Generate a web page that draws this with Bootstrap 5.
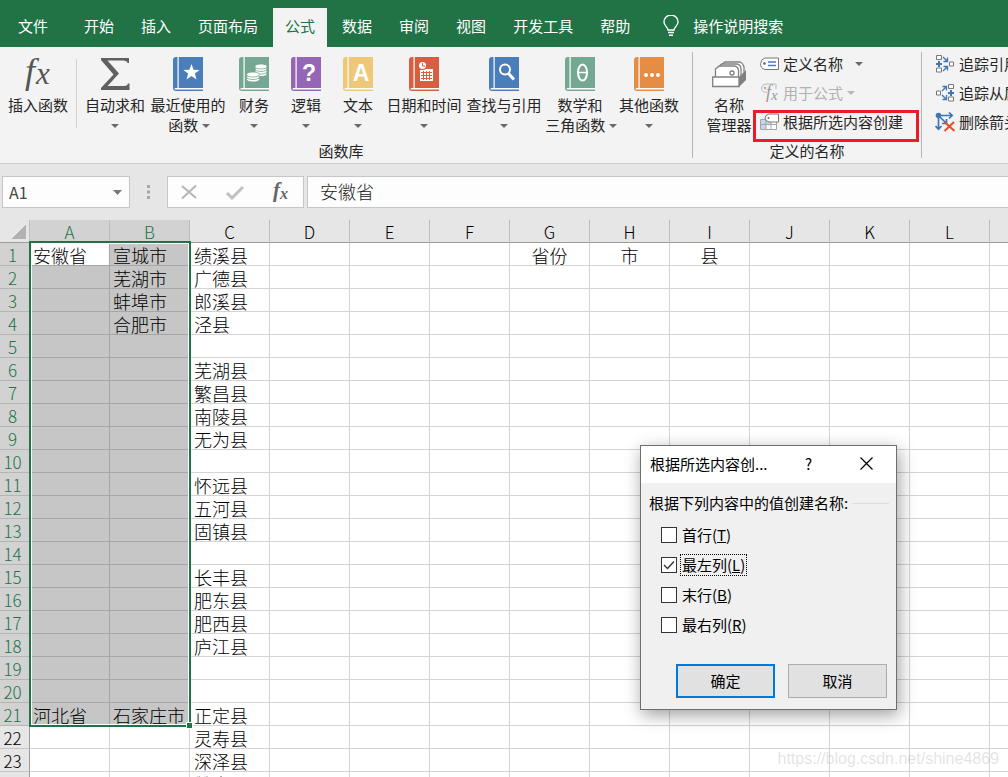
<!DOCTYPE html>
<html lang="zh-CN">
<head>
<meta charset="utf-8">
<meta name="viewport" content="width=device-width, initial-scale=1">
<title>Excel - 公式</title>
<link href="https://cdn.jsdelivr.net/npm/bootstrap@5.3.0/dist/css/bootstrap.min.css" rel="stylesheet">
<style>
  :root { --hdr: 30px; --colw: 80px; --rowh: 23px; --green: #217346; }
  body { font-family: "Noto Sans CJK SC", sans-serif; font-size: 15px; line-height: 20px; color: #262626; background: #e6e6e6; }
  .tabbar { background: var(--green); padding: 8px 0 0 6px; gap: 3px; height: 47px; }
  .tabbar .nav-link { color: #fff; padding: 8px 12px 11px; border-radius: 0; line-height: 20px; }
  .tabbar .nav-link.active { background: #f3f3f3; color: var(--green); }
  .file-tab { margin-right: 9px; }
  .tabbar .tellme { padding-left: 18px; gap: 14px; }

  .ribbon { background: #f3f3f3; border-bottom: 1px solid #d0d0d0; height: 117px; }
  .ribbon button, .fx-tools button, .namebox button { border: 0; background: none; color: inherit; padding: 0; }
  .grp { border-right: 1px solid #b5b5b5; margin: 5px 0; }
  .grp-lib { padding-right: 10px; }
  .grp-body { height: 89px; }
  .grp-name { line-height: 20px; }
  .big { padding-top: 4px !important; width: 52px; text-align: center; line-height: 20px; display: flex; flex-direction: column; align-items: center; }
  .big svg.ico { display: block; height: 35px; margin-bottom: 4px; overflow: visible; }
  .big.w-m { width: 66px; } .big.w-t { width: 72px; } .big.w-l { width: 76px; } .big.w-xl { width: 80px; }
  .caret { display: inline-block; border: 4px solid transparent; border-top-color: #6a6a6a; border-bottom: 0; vertical-align: 3px; }
  .big .caret { margin-right: -2px; }
  .big .caret.solo { margin: 9px 0 0; }
  .vline { width: 1px; background: #d0d0d0; margin: 7px 5px 13px 0; }
  .smallcmd { height: 29px; gap: 4px; }
  .cmds { margin-top: -3px; padding: 0 18px 0 1px; }
  .names .cmds { padding-left: 0; }
  .names .big { width: 67px; padding-left: 5px !important; }
  .trace { padding: 5px 0 0 12px; }
  .dim { color: #b1b1b1 !important; } .dim .caret { border-top-color: #b9b9b9; }
  .smallcmd .caret.far { margin-left: 8px; }
  .hot { position: relative; }
  .hot::after { content: ""; position: absolute; inset: 3px -16px -6px -7px; border: 3px solid #ed1c24; }

  .fbar { padding: 12px 0; gap: 3px; }
  .boxed { height: 32px; background: #fdfdfd; border: 1px solid #c6c6c6; }
  .namebox { width: 128px; margin-left: 2px; padding-right: 7px; }
  .namebox input { width: 90px; border: 0; background: none; padding: 0 6px; font-size: 16px; color: #444; outline: 0; }
  .grip { width: 33px; padding-left: 13px; }
  .fx-tools { width: 137px; padding: 0 12px; }
  .formula { border-right: 0; padding: 0 12px 3px; font-size: 18px; font-weight: 300; color: #222; outline: 0; min-width: 0; }

  .sheetbox { position: relative; overflow: hidden; }
  .grid { table-layout: fixed; border-collapse: separate; border-spacing: 0; width: calc(var(--hdr) + 13 * var(--colw)); background: #fff; color: #000; font-weight: 300; }
  .grid th, .grid td { height: var(--rowh); line-height: 20px; padding: 2px 0 0; font-weight: 300; white-space: nowrap; }
  .grid td { font-size: 18px; padding-left: 4px; border-right: 1px solid #d4d4d4; border-bottom: 1px solid #d4d4d4; }
  .grid td.in { padding-left: 3px; }
  .grid td.mid { text-align: center; padding-left: 0; }
  .grid td.in { background: #c6c6c6; border-color: #a6a6a6; }
  .grid td.cur { background: #fff; }
  .grid th { background: #e6e6e6; text-align: center; font-size: 17px; }
  .grid thead th { border-bottom: 1px solid #9b9b9b; border-right: 1px solid #bdbdbd; }
  .grid tbody th { border-right: 1px solid #9b9b9b; border-bottom: 1px solid #c6c6c6; padding-right: 4px; }
  .grid th.on { background: #d2d2d2; color: var(--green); border-bottom-color: #b5b5b5; }
  .grid thead th.corner { background: linear-gradient(135deg, transparent 50%, #b2b2b2 50%) 12px 5px / 14px 14px no-repeat #e6e6e6; }
  .selection { position: absolute; left: calc(var(--hdr) - 1px); top: calc(var(--rowh) - 2px); width: calc(2 * var(--colw) + 2px); height: calc(21 * var(--rowh) + 3px); border: 2px solid var(--green); box-shadow: inset 0 0 0 1px #fff; pointer-events: none; }
  .selection::after { content: ""; position: absolute; right: -4px; bottom: -4px; width: 7px; height: 7px; background: var(--green); border: 1px solid #fff; }

  .dlg { position: absolute; left: 640px; top: 445px; width: 257px; background: #f0f0f0; color: #000; border: 1px solid #6e6e6e; box-shadow: 2px 5px 16px rgba(0,0,0,.38); }
  .dlg-title { background: #fff; height: 37px; padding: 0 23px 2px 9px; }
  .dlg-title button { border: 0; background: none; padding: 0; }
  .dlg legend { font-size: 15px; line-height: 20px; padding: 10px 7px 7px 8px; margin: 0; }
  .dlg legend::after { content: ""; height: 1px; background: #dcdcdc; flex: 1; }
  .opts { padding-left: 20px; }
  .opt { height: 30px; gap: 3px; }
  .opt .form-check-input { width: 16px; height: 16px; margin: 0; border: 1px solid #333; border-radius: 0; background-color: #fff; box-shadow: none; }
  .opt .form-check-input:checked { background-color: #fff; background-size: 16px; background-image: url("data:image/svg+xml,%3csvg xmlns='http://www.w3.org/2000/svg' viewBox='0 0 16 16'%3e%3cpath fill='none' stroke='%23333' stroke-width='1.4' d='M3 8l3.5 3.5L13 4.5'/%3e%3c/svg%3e"); }
  .opt label { line-height: 20px; border: 1px solid transparent; padding: 0 1px; }
  .opt label.focused { border: 1px dotted #000; }
  .dlg-foot { padding: 24px 9px 11px; gap: 13px; }
  .dlg-foot .btn { width: 99px; height: 34px; border-radius: 0; padding: 0; font-size: 15px; background: #e1e1e1; border: 1px solid #adadad; color: #000; }
  .dlg-foot .btn.main { border: 2px solid #0078d7; }
  .wm { position: absolute; right: 9px; bottom: 8px; font: 16px/20px "Liberation Sans", sans-serif; color: rgba(140,140,140,.25); }
</style>
</head>
<body>
<div class="vh-100 d-flex flex-column overflow-hidden position-relative">

<nav class="tabbar nav flex-nowrap flex-shrink-0 text-nowrap">
  <a class="nav-link file-tab" href="#">文件</a>
  <a class="nav-link" href="#">开始</a>
  <a class="nav-link" href="#">插入</a>
  <a class="nav-link" href="#">页面布局</a>
  <a class="nav-link active" href="#">公式</a>
  <a class="nav-link" href="#">数据</a>
  <a class="nav-link" href="#">审阅</a>
  <a class="nav-link" href="#">视图</a>
  <a class="nav-link" href="#">开发工具</a>
  <a class="nav-link" href="#">帮助</a>
  <a class="nav-link tellme d-flex align-items-center" href="#">
    <svg width="16" height="22" viewBox="0 0 16 22" fill="none" stroke="#fff" stroke-width="1.4"><path d="M5 15c0-3-4-4-4-8a7 7 0 0 1 14 0c0 4-4 5-4 8zM5 17.5h6M6 20.3h4"/></svg>操作说明搜索</a>
</nav>

<svg class="d-none">
  <symbol id="book" viewBox="0 0 30 34"><path fill="currentColor" d="M3 0H30V34H3Q0 34 0 31V3Q0 0 3 0z"/><path fill="#fff" d="M4.500 0h1.200v31H4.500zM2.500 31H30v1.600H2.500Q1 32.600 1.500 31.500z"/></symbol>
</svg>

<div class="ribbon d-flex flex-shrink-0 text-nowrap overflow-hidden">
  <section class="grp grp-lib flex-shrink-0">
    <div class="grp-body d-flex">
      <button class="big w-l"><svg class="ico" width="32" viewBox="0 0 32 35"><text x="3" y="27" font-family="Liberation Serif" font-style="italic" font-size="36" fill="#555">f</text><text x="14" y="28" font-family="Liberation Serif" font-style="italic" font-size="31" fill="#555">x</text></svg>插入函数</button>
      <div class="vline"></div>
      <button class="big w-m"><svg class="ico" width="30" viewBox="0 0 30 35"><path fill="#606060" d="M1 2H29V7H27.500Q27 4.500 23 4.500H7.500L19 17.500L7.500 30H24Q27.500 30 28 27.500H29.500V34H1V32L13.500 18.500L1 4z"/></svg>自动求和<span class="caret solo"></span></button>
      <button class="big w-xl"><svg class="ico" width="30" viewBox="0 0 30 35" color="#4a7ebb"><use href="#book" y="1" width="30" height="34"/><path fill="#fff" d="M18.500 8l2.100 5.700 6 .2-4.700 3.700 1.600 5.800-5-3.300-5 3.300 1.600-5.800-4.700-3.700 6-.2z"/></svg>最近使用的<span>函数 <span class="caret"></span></span></button>
      <button class="big"><svg class="ico" width="30" viewBox="0 0 30 35" color="#75a893"><use href="#book" y="1" width="30" height="34"/><g fill="#fff" stroke="#75a893" stroke-width=".8"><ellipse cx="22" cy="18" rx="6" ry="2.500"/><ellipse cx="22" cy="15.500" rx="6" ry="2.500"/><ellipse cx="22" cy="13" rx="6" ry="2.500"/><ellipse cx="22" cy="10.500" rx="6" ry="2.500"/><ellipse cx="14" cy="23.500" rx="6.500" ry="2.500"/><ellipse cx="14" cy="21" rx="6.500" ry="2.500"/><ellipse cx="14" cy="18.500" rx="6.500" ry="2.500"/></g></svg>财务<span class="caret solo"></span></button>
      <button class="big"><svg class="ico" width="30" viewBox="0 0 30 35" color="#9566b5"><use href="#book" y="1" width="30" height="34"/><text x="18" y="25" text-anchor="middle" font-family="Liberation Sans" font-weight="bold" font-size="23" fill="#fff">?</text></svg>逻辑<span class="caret solo"></span></button>
      <button class="big"><svg class="ico" width="30" viewBox="0 0 30 35" color="#eec779"><use href="#book" y="1" width="30" height="34"/><text x="18" y="25" text-anchor="middle" font-family="Liberation Sans" font-weight="bold" font-size="23" fill="#fff">A</text></svg>文本<span class="caret solo"></span></button>
      <button class="big w-xl"><svg class="ico" width="30" viewBox="0 0 30 35" color="#d65f41"><use href="#book" y="1" width="30" height="34"/><circle cx="13.500" cy="9.500" r="3.500" fill="#fff"/><path d="M13.500 7v3h2.500" fill="none" stroke="#d65f41"/><path fill="#fff" d="M11 14h4l2-1h7v12H11z"/><path stroke="#d65f41" d="M12 16.500h11M12 19.500h11M12 22.500h11M14.500 15v9M17.500 15v9M20.500 15v9"/></svg>日期和时间<span class="caret solo"></span></button>
      <button class="big w-xl"><svg class="ico" width="30" viewBox="0 0 30 35" color="#4a7ebb"><use href="#book" y="1" width="30" height="34"/><circle cx="16" cy="13.500" r="5" fill="none" stroke="#fff" stroke-width="2"/><path d="M19.500 17.500l5.500 6" stroke="#fff" stroke-width="3"/></svg>查找与引用<span class="caret solo"></span></button>
      <button class="big w-t"><svg class="ico" width="30" viewBox="0 0 30 35" color="#75a893"><use href="#book" y="1" width="30" height="34"/><ellipse cx="17.500" cy="16.500" rx="4.500" ry="8" fill="none" stroke="#fff" stroke-width="2"/><path d="M13 16.500h9" stroke="#fff" stroke-width="1.500"/></svg>数学和<span>三角函数 <span class="caret"></span></span></button>
      <button class="big w-m"><svg class="ico" width="30" viewBox="0 0 30 35" color="#e58d44"><use href="#book" y="1" width="30" height="34"/><g fill="#fff"><circle cx="12" cy="19" r="2"/><circle cx="18" cy="19" r="2"/><circle cx="24" cy="19" r="2"/></g></svg>其他函数<span class="caret solo"></span></button>
    </div>
    <div class="grp-name text-center">函数库</div>
  </section>

  <section class="grp names flex-shrink-0">
    <div class="grp-body d-flex">
      <button class="big"><svg class="ico" width="36" viewBox="0 0 36 35"><g fill="#fff" stroke="#808080" stroke-width="1.300"><path d="M10 22V9l4-3h15q3 1 4 5v11z"/><path d="M7 24V11l4-3h15q4 1 4 5v11z"/><path d="M4.500 26V13l4-3h15q4 1 4 5v11z"/><circle cx="21" cy="17" r="2"/></g><path fill="#808080" d="M28 21l7-7v10l-7 7z"/><path fill="#fff" stroke="#808080" stroke-width="1.300" d="M1.700 21h26.300v9.500H1.700z"/></svg>名称<br>管理器</button>
      <div class="cmds d-flex flex-column align-items-start">
        <button class="smallcmd d-flex align-items-center"><svg width="19" height="14" viewBox="0 0 19 14"><path fill="#fff" stroke="#777" d="M5 1h13.500v11.500H5Q0 11 .7 6.500 1 2 5 1z"/><circle cx="4.500" cy="6.500" r="1.300" fill="#666"/><path stroke="#4a7ebb" stroke-width="1.300" d="M8 5h8M8 8.500h8"/></svg>定义名称<span class="caret far"></span></button>
        <button class="smallcmd dim d-flex align-items-center" disabled><svg width="19" height="19" viewBox="0 0 19 19"><path fill="none" stroke="#bbb" d="M7 9.500Q1 9 1.500 5 2 1 6 1h10v5"/><circle cx="5" cy="5" r="1.200" fill="#aaa"/><text x="6" y="15" font-family="Liberation Serif" font-style="italic" font-size="18" fill="#999">f</text><text x="11" y="17" font-family="Liberation Serif" font-style="italic" font-size="15" fill="#999">x</text></svg>用于公式<span class="caret"></span></button>
        <button class="smallcmd hot d-flex align-items-center"><svg width="19" height="18" viewBox="0 0 19 18"><path fill="#fff" d="M.500 6.500h16v10H.500z"/><path fill="#c5d5ea" d="M1 6h5v11H1zM6 6h5v5H6z"/><path fill="none" stroke="#a5a5a5" d="M.500 6.500H16.500V16.500H.500zM.500 11.500h16M6 6v10M11 6v10"/><path fill="#fff" stroke="#777" d="M9 1h9.500v8H9Q5 8 5 5 5 2 9 1z"/><circle cx="8.500" cy="5" r="1" fill="#666"/></svg>根据所选内容创建</button>
      </div>
    </div>
    <div class="grp-name text-center">定义的名称</div>
  </section>

  <section class="trace flex-shrink-0">
    <div class="cmds d-flex flex-column align-items-start">
      <button class="smallcmd d-flex align-items-center"><svg width="20" height="18" viewBox="0 0 20 18" fill="none" stroke="#777"><path fill="#fff" d="M1.500.500h5v4h-5zM1.500 13h5v4h-5zM14.500 7h4v4h-4z"/><g stroke="#3d77b5"><path stroke-width="2" d="M1 9h6M4 6v6"/><path stroke-width="1.300" d="M8 2l4 4M12.500 2.500v4h-4M8 16l4-4M8.500 11.500h4v4"/></g></svg>追踪引用单元格</button>
      <button class="smallcmd d-flex align-items-center"><svg width="20" height="18" viewBox="0 0 20 18" fill="none" stroke="#777"><path fill="#fff" d="M13.500.500h5v4h-5zM13.500 13h5v4h-5zM1.500 7h4v4h-4z"/><g stroke="#3d77b5"><path stroke-width="2" d="M13 9h6M16 6v6"/><path stroke-width="1.300" d="M7 7l4-4M7.500 2.500h4v4M7 11l4 4M11.500 11v4.500h-4"/></g></svg>追踪从属单元格</button>
      <button class="smallcmd d-flex align-items-center"><svg width="20" height="20" viewBox="0 0 20 20" fill="none" stroke="#3d77b5"><circle cx="3.500" cy="3.500" r="2.800" fill="#3d77b5" stroke="none"/><path stroke-width="1.700" d="M6 3.500h11M14 .500l3.200 3L14 6.500M3.500 6v11M.500 14l3 3.200 3-3.200M5 5l6 6M11.500 7v4.500H7"/><path stroke="#e0512f" stroke-width="2" d="M9.500 10l10 9M19 10l-9.500 9"/></svg>删除箭头</button>
    </div>
  </section>
</div>

<div class="fbar d-flex flex-shrink-0">
  <div class="d-flex">
    <div class="boxed namebox d-flex align-items-center justify-content-between"><input aria-label="名称框" value="A1"><button class="d-flex" aria-label="选择名称"><svg width="9" height="5"><path fill="#777" d="M0 0h9L4.500 5z"/></svg></button></div>
    <div class="grip d-flex align-items-center ms-1"><svg width="3" height="14" fill="#a8a8a8"><path d="M0 0h3v3H0zM0 5.500h3v3H0zM0 11h3v3H0z"/></svg></div>
    <div class="boxed fx-tools d-flex align-items-center justify-content-between">
      <button class="d-flex" aria-label="取消输入"><svg width="19" height="16" fill="none" stroke="#b5b5b5" stroke-width="2"><path d="M2 2l14 12M16 1.500L2 14.500"/></svg></button>
      <button class="d-flex" aria-label="输入"><svg width="18" height="15" fill="none" stroke="#c0c0c0" stroke-width="3"><path d="M1 8l5 5L17 2"/></svg></button>
      <button class="d-flex" aria-label="插入函数"><svg width="20" height="22" font-family="Liberation Serif" font-style="italic" font-weight="bold" fill="#666"><text x="2" y="16" font-size="21">f</text><text x="9" y="18" font-size="16">x</text></svg></button>
    </div>
  </div>
  <input class="boxed formula flex-grow-1" aria-label="编辑栏" value="安徽省">
</div>

<main class="sheetbox flex-grow-1">
  <table class="grid" id="grid"><thead></thead><tbody></tbody></table>
  <div class="selection"></div>
  <div class="wm">https://blog.csdn.net/shine4869</div>
</main>

<div class="dlg" role="dialog" aria-labelledby="dlgTitle">
  <div class="dlg-title d-flex align-items-center">
    <span id="dlgTitle" class="flex-grow-1">根据所选内容创...</span>
    <button class="me-5" aria-label="帮助">?</button>
    <button class="d-flex" aria-label="关闭"><svg width="13" height="13" stroke="#000" stroke-width="1.200"><path d="M.500.500l12 12M12.500.500l-12 12"/></svg></button>
  </div>
  <form>
    <fieldset>
      <legend class="d-flex align-items-center gap-1 float-none">根据下列内容中的值创建名称:</legend>
      <div class="opts">
        <div class="opt d-flex align-items-center"><input class="form-check-input" type="checkbox" id="o1"><label for="o1">首行(<u>T</u>)</label></div>
        <div class="opt d-flex align-items-center"><input class="form-check-input" type="checkbox" id="o2" checked><label class="focused" for="o2">最左列(<u>L</u>)</label></div>
        <div class="opt d-flex align-items-center"><input class="form-check-input" type="checkbox" id="o3"><label for="o3">末行(<u>B</u>)</label></div>
        <div class="opt d-flex align-items-center"><input class="form-check-input" type="checkbox" id="o4"><label for="o4">最右列(<u>R</u>)</label></div>
      </div>
    </fieldset>
    <div class="dlg-foot d-flex justify-content-end">
      <button type="button" class="btn main">确定</button>
      <button type="button" class="btn">取消</button>
    </div>
  </form>
</div>
</div>

<script src="https://cdn.jsdelivr.net/npm/bootstrap@5.3.0/dist/js/bootstrap.bundle.min.js"></script>
<script>
  const cols = 'ABCDEFGHIJKLM'.split('');
  const data = {
    A: { 1: '安徽省', 21: '河北省' },
    B: { 1: '宣城市', 2: '芜湖市', 3: '蚌埠市', 4: '合肥市', 21: '石家庄市' },
    C: { 1: '绩溪县', 2: '广德县', 3: '郎溪县', 4: '泾县', 6: '芜湖县', 7: '繁昌县', 8: '南陵县', 9: '无为县',
         11: '怀远县', 12: '五河县', 13: '固镇县', 15: '长丰县', 16: '肥东县', 17: '肥西县', 18: '庐江县',
         21: '正定县', 22: '灵寿县', 23: '深泽县', 24: '赞皇县' },
    G: { 1: '省份' }, H: { 1: '市' }, I: { 1: '县' }
  };
  const grid = document.getElementById('grid');
  const selected = (c, r) => c < 2 && r <= 21;
  grid.tHead.innerHTML = '<tr><th class="corner" style="width:var(--hdr)"></th>' +
    cols.map((c, i) => `<th scope="col" class="${i < 2 ? 'on' : ''}">${c}</th>`).join('') + '</tr>';
  let html = '';
  for (let r = 1; r <= 24; r++) {
    html += `<tr><th scope="row" class="${r <= 21 ? 'on' : ''}">${r}</th>` + cols.map((c, i) => {
      const cls = [selected(i, r) ? 'in' : '', i === 0 && r === 1 ? 'cur' : '', i > 5 ? 'mid' : ''].join(' ').trim();
      return `<td class="${cls}">${(data[c] || {})[r] || ''}</td>`;
    }).join('') + '</tr>';
  }
  grid.tBodies[0].innerHTML = html;
</script>
</body>
</html>
